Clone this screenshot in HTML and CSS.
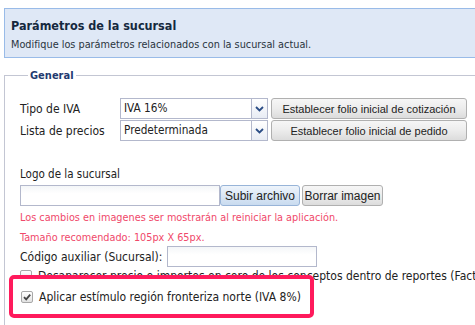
FILE: index.html
```html
<!DOCTYPE html>
<html lang="es">
<head>
  <meta charset="UTF-8" />
  <title>Parámetros de la sucursal</title>
  <link rel="stylesheet" href="styles.css">
</head>
<body>
  <div class="page">
    <!-- encabezado -->
    <div class="panel-head">
      <div class="panel-title">Parámetros de la sucursal</div>
      <div class="panel-sub">Modifique los parámetros relacionados con la sucursal actual.</div>
    </div>

    <!-- general -->
    <fieldset class="group">
      <legend>General</legend>

      <div class="form-row first">
        <label class="lbl">Tipo de IVA</label>
        <div class="combo">
          <span class="combo-text">IVA 16%</span>
          <span class="combo-arrow"><svg viewBox="0 0 9 6" width="9" height="6"><path d="M1 1 L4.5 4.5 L8 1" fill="none" stroke="#2b4d86" stroke-width="1.8"/></svg></span>
        </div>
        <button class="btn wide">Establecer folio inicial de cotización</button>
      </div>
      <div class="form-row">
        <label class="lbl">Lista de precios</label>
        <div class="combo">
          <span class="combo-text">Predeterminada</span>
          <span class="combo-arrow"><svg viewBox="0 0 9 6" width="9" height="6"><path d="M1 1 L4.5 4.5 L8 1" fill="none" stroke="#2b4d86" stroke-width="1.8"/></svg></span>
        </div>
        <button class="btn wide">Establecer folio inicial de pedido</button>
      </div>

      <div class="logo-label">Logo de la sucursal</div>
      <div class="file-row">
        <div class="text-input file"></div>
        <button class="btn upload">Subir archivo</button>
        <button class="btn">Borrar imagen</button>
      </div>
      <div class="warn">Los cambios en imagenes ser mostrarán al reiniciar la aplicación.</div>
      <div class="warn">Tamaño recomendado: 105px X 65px.</div>

      <div class="code-row">
        <label>Código auxiliar (Sucursal):</label>
        <div class="text-input code"></div>
      </div>

      <div class="check-row">
        <span class="check"></span>
        <span>Desaparecer precio e importes en cero de los conceptos dentro de reportes (Facturas)</span>
      </div>

      <!-- resaltado -->
      <div class="highlight">
        <span class="check checked"><svg viewBox="0 0 10 10" width="10" height="10"><path d="M2 5.2 L4.2 7.4 L8.2 2.6" fill="none" stroke="#444" stroke-width="1.8"/></svg></span>
        <span>Aplicar estímulo región fronteriza norte (IVA 8%)</span>
      </div>
    </fieldset>
  </div>
</body>
</html>
```

FILE: styles.css
```css
/* ===== página ===== */
html{overflow:hidden;}
body{margin:0;background:#fff;font-family:"DejaVu Sans Condensed","DejaVu Sans",sans-serif;font-size:11px;color:#222;}
.page{width:540px;padding:8px 0 0 4px;}

/* ===== encabezado ===== */
.panel-head{border:1px solid #99bbe8;background:#dfe8f6;height:48px;padding:0 6px;box-sizing:content-box;}
.panel-title{font-weight:bold;font-size:12.5px;color:#15283e;margin-top:9px;line-height:16px;}
.panel-sub{font-size:10.8px;color:#2a3440;margin-top:3px;line-height:15px;}

/* ===== grupo General ===== */
.group{border:1px solid #c3c6d3;margin:11px 0 0 0;padding:6px 0 0 15px;position:relative;height:260px;}
.group legend{font-weight:bold;color:#1f3a70;font-size:11px;padding:0 2px;margin-left:8px;}

.form-row{display:flex;align-items:center;height:21px;margin-bottom:1px;}
.form-row.first{margin-top:10px;}
.lbl{width:100px;font-size:12px;}

.combo{display:flex;width:148px;height:21px;box-sizing:border-box;border:1px solid #b3b8cc;background:#fff;}
.combo-text{flex:1;padding:2px 0 0 3px;font-size:11.7px;}
.combo-arrow{width:15px;border-left:1px solid #b3b8cc;background:linear-gradient(#fff,#e8ecf4);display:flex;align-items:center;justify-content:center;}

.btn{font-family:"Liberation Sans",Arial,sans-serif;font-size:11px;color:#222;height:21px;padding:0;white-space:nowrap;
     border:1px solid #b0b0b0;border-radius:3px;background:linear-gradient(#f6f6f6 0%,#ececec 50%,#dcdcdc 100%);}
.btn.wide{width:196px;margin-left:3px;}

.logo-label{margin-top:26px;line-height:14px;font-size:11.5px;}
.file-row{display:flex;align-items:center;margin-top:4px;gap:2px;}
.text-input{height:21px;box-sizing:border-box;border:1px solid #b3b8cc;background:linear-gradient(#f4f6f8,#fff 40%);}
.text-input.file{width:200px;margin-right:-2px;}
.btn.upload{width:80px;font-size:12px;border-color:#98b4d8;background:linear-gradient(#eef4fb,#d9e6f5 55%,#c9dbef);}
.btn.upload + .btn{width:81px;font-size:12px;}

.warn{color:#f0486a;font-size:10.8px;line-height:14px;margin-top:5px;}
.warn + .warn{margin-top:6px;}

.code-row{display:flex;align-items:center;gap:5px;margin-top:1px;font-size:12px;}
.text-input.code{width:150px;}

.check-row{display:flex;align-items:center;gap:6px;margin-top:2px;white-space:nowrap;font-size:12px;}
.check{width:12px;height:12px;box-sizing:border-box;border:1px solid #a8a8a8;border-radius:2px;flex:none;
       background:linear-gradient(#fff,#e2e2e2);display:inline-flex;align-items:center;justify-content:center;}

.highlight{position:absolute;left:4px;top:193px;width:289px;height:35px;border:4px solid #ff1a5c;border-radius:5px;
           background:#fff;display:flex;align-items:center;gap:6px;padding-left:8px;white-space:nowrap;font-size:12px;}
```
